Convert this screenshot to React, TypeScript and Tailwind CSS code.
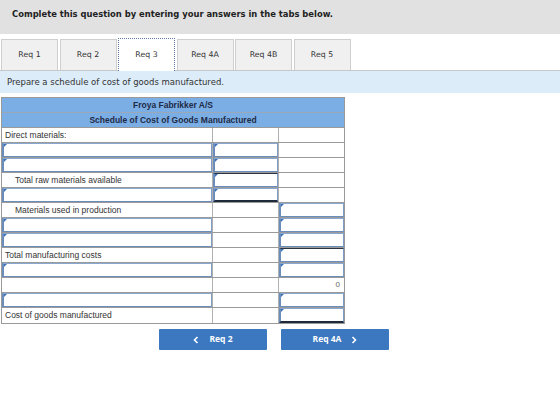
import React from "react";

type Cell = "empty" | "input" | "inputTop" | "inputBottom" | "zero";
type Row = { label: string | null; indent?: boolean; c1: Cell; c2: Cell; c3: Cell };

const rows: Row[] = [
  { label: "Direct materials:", c1: "empty", c2: "empty", c3: "empty" },
  { label: null, c1: "input", c2: "input", c3: "empty" },
  { label: null, c1: "input", c2: "input", c3: "empty" },
  { label: "Total raw materials available", indent: true, c1: "empty", c2: "inputTop", c3: "empty" },
  { label: null, c1: "input", c2: "inputBottom", c3: "empty" },
  { label: "Materials used in production", indent: true, c1: "empty", c2: "empty", c3: "input" },
  { label: null, c1: "input", c2: "empty", c3: "input" },
  { label: null, c1: "input", c2: "empty", c3: "input" },
  { label: "Total manufacturing costs", c1: "empty", c2: "empty", c3: "inputTop" },
  { label: null, c1: "input", c2: "empty", c3: "input" },
  { label: null, c1: "empty", c2: "empty", c3: "zero" },
  { label: null, c1: "input", c2: "empty", c3: "input" },
  { label: "Cost of goods manufactured", c1: "empty", c2: "empty", c3: "inputBottom" },
];

function InputBox({ kind }: { kind: Cell }) {
  const top = kind === "inputTop" ? "border-t-[#2a3442]" : "border-t-[#8aa7cf]";
  const bottom = kind === "inputBottom" ? "border-b-[#1e2a3a] border-b-2" : "border-b-[#6b8dbb]";
  return (
    <div className={`absolute inset-0 bg-white border border-[#7d9cc8] border-l-2 border-l-[#6b8dbb] ${top} ${bottom}`}>
      <div className="absolute left-0 top-0 w-0 h-0 border-t-[3px] border-t-[#3b72b8] border-r-[3px] border-r-transparent" />
    </div>
  );
}

function DataCell({ kind, width, last }: { kind: Cell; width: string; last?: boolean }) {
  return (
    <div className={`relative ${width} h-full ${last ? "" : "border-r border-[#b0b0b0]"}`}>
      {kind === "zero" && (
        <div className="absolute right-[4px] top-0 h-full flex items-center text-[8px] text-[#666]">0</div>
      )}
      {(kind === "input" || kind === "inputTop" || kind === "inputBottom") && <InputBox kind={kind} />}
    </div>
  );
}

function Chevron({ dir }: { dir: "left" | "right" }) {
  return (
    <svg width="6" height="8" viewBox="0 0 6 8" className="block">
      <path
        d={dir === "left" ? "M4.5 1 L1.5 4 L4.5 7" : "M1.5 1 L4.5 4 L1.5 7"}
        fill="none"
        stroke="white"
        strokeWidth="1.6"
      />
    </svg>
  );
}

export default function App() {
  const sans = { fontFamily: '"Liberation Sans", Arial, sans-serif' };
  const verdana = { fontFamily: '"DejaVu Sans", Verdana, sans-serif' };
  return (
    <div className="w-[560px] h-[418px] bg-white relative overflow-hidden">
      <div className="h-[34px] bg-[#e1e1e1] pt-[9px] pl-[12px]" style={verdana}>
        <div className="text-[8.4px] leading-[10px] font-bold text-[#222]">
          Complete this question by entering your answers in the tabs below.
        </div>
      </div>

      <div className="mt-[5px] h-[32px] flex items-end gap-[1.5px] pl-[1px] border-b border-[#c8c8c8]" style={verdana}>
        {["Req 1", "Req 2", "Req 3", "Req 4A", "Req 4B", "Req 5"].map((t) =>
          t === "Req 3" ? (
            <div
              key={t}
              className="w-[57px] h-[33px] -mb-[1px] bg-white border border-dotted border-[#5d7fa8] border-b-0 flex items-center justify-center text-[7.8px] text-[#333]"
            >
              {t}
            </div>
          ) : (
            <div
              key={t}
              className="w-[57px] h-[31px] bg-[#f0f0f0] border border-[#cfcfcf] border-b-0 flex items-center justify-center text-[7.8px] text-[#333]"
            >
              {t}
            </div>
          )
        )}
      </div>

      <div className="h-[22px] bg-[#dcecf9] flex items-center pl-[7px]" style={verdana}>
        <span className="text-[8.5px] text-[#333]">Prepare a schedule of cost of goods manufactured.</span>
      </div>

      <div className="mt-[4px] ml-[1px] w-[344px] border border-[#9a9a9a]" style={sans}>
        <div className="h-[15px] bg-[#7baee5] border-b border-[#9aa8b8] flex items-center justify-center text-[8.5px] font-bold text-[#1f2b45]">
          Froya Fabrikker A/S
        </div>
        <div className="h-[15px] bg-[#7baee5] border-b border-[#9a9a9a] flex items-center justify-center text-[8.5px] font-bold text-[#1f2b45]">
          Schedule of Cost of Goods Manufactured
        </div>
        {rows.map((r, i) => (
          <div
            key={i}
            className={`flex h-[15px] ${i === rows.length - 1 ? "" : "border-b border-[#9a9a9a]"}`}
          >
            <div className="relative w-[211px] h-full border-r border-[#b0b0b0]">
              {r.label && (
                <div
                  className={`absolute top-0 h-full flex items-center text-[8.5px] text-[#333] ${
                    r.indent ? "left-[13px]" : "left-[3px]"
                  }`}
                >
                  {r.label}
                </div>
              )}
              {r.c1 !== "empty" && <InputBox kind={r.c1} />}
            </div>
            <DataCell kind={r.c2} width="w-[66px]" />
            <DataCell kind={r.c3} width="flex-1" last />
          </div>
        ))}
      </div>

      <div className="mt-[5px] ml-[159px] flex gap-[14px]" style={{ fontFamily: '"Open Sans", Verdana, sans-serif' }}>
        <div className="w-[108px] h-[21px] bg-[#3b78c0] rounded-[1px] flex items-center justify-center gap-[10px] text-white text-[8.5px] font-bold">
          <Chevron dir="left" />
          <span>Req 2</span>
        </div>
        <div className="w-[108px] h-[21px] bg-[#3b78c0] rounded-[1px] flex items-center justify-center gap-[10px] text-white text-[8.5px] font-bold">
          <span>Req 4A</span>
          <Chevron dir="right" />
        </div>
      </div>
    </div>
  );
}
